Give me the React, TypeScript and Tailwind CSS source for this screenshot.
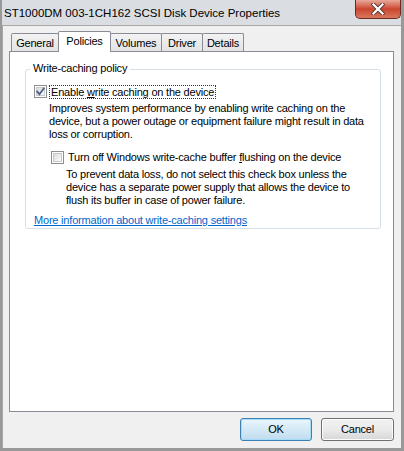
// Windows 7 style "Disk Device Properties" dialog, Policies tab

const FONT = { fontFamily: '"Liberation Sans", Arial, sans-serif' };

const TABS = [
  { label: "General", w: "w-[48px]" },
  { label: "Policies", w: "w-[53px]", active: true },
  { label: "Volumes", w: "w-[52px]" },
  { label: "Driver", w: "w-[42px]" },
  { label: "Details", w: "w-[42px]" },
];

function CheckBox({ checked }: { checked?: boolean }) {
  return (
    <div className="relative w-[13px] h-[13px] shrink-0 border border-[#8e8f8f] bg-white p-px">
      <div className="w-full h-full border border-[#c6c9cf] bg-gradient-to-br from-[#dcdcdc] to-[#fbfbfb]" />
      {checked && (
        <svg viewBox="0 0 13 13" className="absolute inset-0 w-[13px] h-[13px] -m-px">
          <path d="M3.2 6.6 L5.4 9.2 L9.8 3.4" fill="none" stroke="#4d6185" strokeWidth="1.8" strokeLinecap="square" />
        </svg>
      )}
    </div>
  );
}

function CloseButton() {
  return (
    <div className="w-[46px] h-[19px] rounded-b-[5px] border border-t-0 border-[#6b2b22] bg-gradient-to-b from-[#e9a99a] via-[#c9452f] to-[#d9775c] flex items-center justify-center">
      <svg viewBox="0 0 14 12" className="w-[14px] h-[12px]">
        <path d="M2.5 1.5 L11.5 10.5 M11.5 1.5 L2.5 10.5" stroke="#5a3a36" strokeWidth="4" strokeLinecap="square" />
        <path d="M2.5 1.5 L11.5 10.5 M11.5 1.5 L2.5 10.5" stroke="#ffffff" strokeWidth="2.2" strokeLinecap="square" />
      </svg>
    </div>
  );
}

export default function App() {
  return (
    <div
      className="w-[404px] h-[451px] flex flex-col bg-[#dadde2] border-l-2 border-r-[3px] border-b-[3px] border-[#999999] overflow-hidden text-[11px] tracking-[-0.2px] text-black"
      style={FONT}
    >
      {/* Title bar */}
      <div className="h-[25px] flex items-start justify-between shrink-0">
        <span className="pl-[2px] pt-[6px] text-[11.5px] tracking-normal leading-[14px] text-black">
          ST1000DM 003-1CH162 SCSI Disk Device Properties
        </span>
        <CloseButton />
      </div>

      {/* Client area */}
      <div className="flex-1 flex flex-col bg-[#f0f0f0] border-t border-l border-[#a8a8a8] pl-[6px] pr-[6px] pt-[5px]">
        {/* Tabs */}
        <div className="relative z-10 flex items-end h-[20px] pl-[2px]">
          {TABS.map((t, i) =>
            t.active ? (
              <div
                key={t.label}
                className={`${t.w} ${i > 0 ? "-ml-px" : ""} h-[21px] -mb-px z-10 bg-white border border-b-0 border-[#898c95] rounded-t-[2px] flex items-start justify-center pt-[3px] leading-[13px]`}
              >
                {t.label}
              </div>
            ) : (
              <div
                key={t.label}
                className={`${t.w} ${i > 0 ? "-ml-px" : ""} h-[18px] bg-gradient-to-b from-[#f3f3f3] to-[#e3e3e3] border border-b-0 border-[#898c95] rounded-t-[2px] flex items-start justify-center pt-[3px] leading-[13px]`}
              >
                {t.label}
              </div>
            )
          )}
        </div>

        {/* Tab panel */}
        <div className="h-[361px] w-[385px] bg-white border border-[#898c95] pt-[17px] pl-[15px]">
          <div className="relative w-[356px] h-[160px] border border-[#d5dfe5] rounded-[3px] pt-[15px] pl-[8px]">
            <span className="absolute -top-[8px] left-[4px] bg-white px-[3px] leading-[13px]">
              Write-caching policy
            </span>

            <div className="flex items-center gap-[3px]">
              <CheckBox checked />
              <span className="outline outline-1 outline-dotted outline-[#333] px-px leading-[12px]">
                Enable <span className="underline">w</span>rite caching on the device
              </span>
            </div>
            <p className="pl-[15px] pt-[4px] leading-[13px] w-[345px]">
              Improves system performance by enabling write caching on the device, but a power outage or equipment failure might result in data loss or corruption.
            </p>

            <div className="flex items-center gap-[4px] pl-[17px] pt-[10px]">
              <CheckBox />
              <span className="leading-[13px]">
                Turn off Windows write-cache buffer <span className="underline">f</span>lushing on the device
              </span>
            </div>
            <p className="pl-[32px] pt-[4px] leading-[13px] w-[335px]">
              To prevent data loss, do not select this check box unless the device has a separate power supply that allows the device to flush its buffer in case of power failure.
            </p>

            <div className="pt-[7px] leading-[13px]">
              <span className="text-[#0066cc] underline">More information about write-caching settings</span>
            </div>
          </div>
        </div>

        {/* Buttons */}
        <div className="flex justify-end gap-[9px] pt-[6px] pr-px">
          <button className="w-[72px] h-[23px] rounded-[3px] border border-[#3c7fb1] bg-gradient-to-b from-[#eaf6fd] to-[#bfdcef] shadow-[inset_0_0_0_1px_#a5dcf7] leading-[13px]">
            OK
          </button>
          <button className="w-[73px] h-[23px] rounded-[3px] border border-[#707070] bg-gradient-to-b from-[#f2f2f2] via-[#ebebeb] to-[#d6d6d6] shadow-[inset_0_0_0_1px_#fcfcfc] leading-[13px]">
            Cancel
          </button>
        </div>
      </div>
    </div>
  );
}
